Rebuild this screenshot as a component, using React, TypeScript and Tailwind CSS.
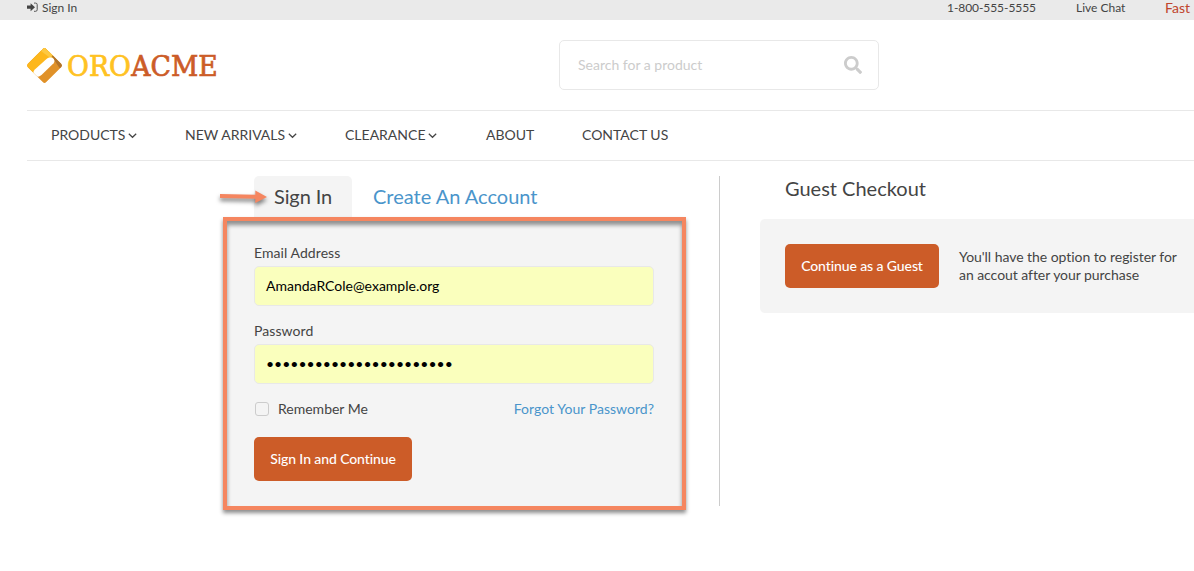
import React from "react";
import { FaSearch } from "react-icons/fa";

function SignInIcon() {
  return (
    <svg className="mt-0.5 h-[11px] w-[11px]" viewBox="0 0 11 11" fill="none">
      <path d="M0 3.6h3.6V1.2L8 5.2 3.6 9.2V6.8H0z" fill="#444" />
      <path d="M7 1.1h1.6a1.6 1.6 0 0 1 1.6 1.6v5a1.6 1.6 0 0 1-1.6 1.6H7" stroke="#555" strokeWidth="1" />
    </svg>
  );
}

function Chevron() {
  return (
    <svg className="ml-[3px] mt-px h-[9px] w-[9px]" viewBox="0 0 9 9" fill="none">
      <path d="M.8 2.800l3.700 3.500L8.200 2.800" stroke="#444" strokeWidth="1.2" />
    </svg>
  );
}

function Logo() {
  return (
    <svg className="h-9 w-[192px] shrink-0 overflow-visible" viewBox="0 0 192 36">
      <defs>
        <clipPath id="mark">
          <rect x="5.500" y="5.500" width="26" height="26" rx="2.500" transform="rotate(45 18.500 18.500)" />
        </clipPath>
      </defs>
      <g clipPath="url(#mark)">
        <path d="M0 0h37v37H0z" fill="#e09128" />
        <path d="M0 0h28v12L9 30H0z" fill="#fdb71c" />
        <path d="M15 4l3-4 12 10-3 3z" fill="#fdc842" />
        <path d="M25.500 9l4-2 8 8v5l-4 1z" fill="#b0732a" />
        <path
          d="M7.500 27.500c-.6-2 0-3.600 1.600-5.200L20.500 12c2.500-2 5-1.800 6.500-.8s2 3.300.6 5L16 27.500c-2 1.800-4.300 2.800-6.500 2.200z"
          fill="#fff"
        />
      </g>
      <g fontFamily="DejaVu Serif, serif" fontSize="27.500" strokeWidth=".7">
        <text x="41" y="28.500" textLength="64" lengthAdjust="spacingAndGlyphs" fill="#ffc222" stroke="#ffc222">ORO</text>
        <text x="105.300" y="28.500" textLength="86.500" lengthAdjust="spacingAndGlyphs" fill="#cc5c28" stroke="#cc5c28">ACME</text>
      </g>
    </svg>
  );
}

function NavItem({ label, menu, width }: { label: string; menu?: boolean; width: string }) {
  return (
    <a className={"flex items-center whitespace-nowrap " + width}>
      {label}
      {menu && <Chevron />}
    </a>
  );
}

function Field({ label, value }: { label: string; value: string }) {
  return (
    <label className="flex flex-col">
      <span className="h-[18px] leading-[18px] tracking-[0.07px]">{label}</span>
      <span className="mt-1 flex h-10 items-center rounded-[5px] border border-[#e8e8e8] bg-[#faffbd] px-[11px] pb-0.5 text-black">
        {value}
      </span>
    </label>
  );
}

function Arrow() {
  return (
    <svg className="absolute left-[214px] top-[184px] h-[30px] w-[60px] overflow-visible" viewBox="0 0 60 30">
      <path
        d="M6 10l35.300.7V6.500l11.700 6.500-11.700 6v-4.200L6 14z"
        fill="#f58660"
        className="drop-shadow-[0_3px_2px_rgba(0,0,0,0.5)]"
      />
    </svg>
  );
}

export default function App() {
  return (
    <div className="relative h-[571px] w-full overflow-hidden bg-white font-['Lato',sans-serif] text-[14px] text-[#444]">
      <div className="flex h-5 items-start justify-between overflow-hidden bg-[#eaeaea] pl-[27px] text-[12px] leading-4">
        <a className="flex gap-1">
          <SignInIcon />
          <span>Sign In</span>
        </a>
        <div className="flex w-[247px] shrink-0 whitespace-nowrap">
          <span className="w-[129px] tracking-[-0.07px]">1-800-555-5555</span>
          <span className="w-[89px]">Live Chat</span>
          <span className="text-[14px] text-[#c0452c]">Fast</span>
        </div>
      </div>

      <header className="ml-[26px] flex h-[90px] items-center">
        <Logo />
        <div className="ml-[341px] flex h-[50px] w-[320px] items-center justify-between rounded-[5px] border border-[#e8e8e8] pl-[18px] pr-4 text-[#ccc]">
          <span className="pb-0.5">Search for a product</span>
          <FaSearch size={18} />
        </div>
      </header>

      <nav className="ml-[27px] flex h-[51px] items-center border-y border-[#e8e8e8] pb-0.5 pl-6">
        <NavItem label="PRODUCTS" menu width="w-[134px]" />
        <NavItem label="NEW ARRIVALS" menu width="w-[160px]" />
        <NavItem label="CLEARANCE" menu width="w-[141px]" />
        <NavItem label="ABOUT" width="w-[96px]" />
        <NavItem label="CONTACT US" width="w-[100px]" />
      </nav>

      <main className="flex items-start pt-[15px]">
        <section className="ml-[223px] w-[463px] shrink-0">
          <div className="ml-[31px] flex h-[41px] text-[20px] leading-[41px]">
            <h2 className="w-[98px] rounded-t-[5px] bg-[#f4f4f4] pl-5 tracking-[-0.1px]">Sign In</h2>
            <a className="ml-[21px] text-[#4a95cb]">Create An Account</a>
          </div>
          <div className="relative h-[293px] border-4 border-[#f58660] bg-[#f4f4f4] px-[27px] pt-[23px] shadow-[0_3px_4px_rgba(0,0,0,0.45),inset_0_4px_4px_rgba(0,0,0,0.42)]">
            <div className="flex w-[400px] flex-col gap-4">
              <Field label="Email Address" value="AmandaRCole@example.org" />
              <Field label="Password" value="•••••••••••••••••••••••" />
            </div>
            <div className="mt-4 flex h-[18px] w-[400px] items-center justify-between">
              <label className="flex items-center">
                <span className="ml-px mr-[9px] h-3.5 w-3.5 rounded-[3px] border border-[#ccc]" />
                <span className="pb-0.5">Remember Me</span>
              </label>
              <a className="pb-0.5 tracking-[0.03px] text-[#4a95cb]">Forgot Your Password?</a>
            </div>
            <button className="mt-[19px] h-11 w-[158px] rounded-[5px] bg-[#cc5c28] pb-0.5 font-medium tracking-[-0.1px] text-white">
              Sign In and Continue
            </button>
          </div>
        </section>

        <section className="ml-[33px] h-[330px] flex-1 border-l border-[#ccc] pl-10">
          <h2 className="h-[43px] pl-[25px] text-[20px] leading-[25px]">Guest Checkout</h2>
          <div className="flex h-[94px] items-center rounded-l-[5px] bg-[#f4f4f4] pl-[25px]">
            <button className="h-11 w-[154px] shrink-0 rounded-[5px] bg-[#cc5c28] pb-0.5 font-medium tracking-[-0.1px] text-white">
              Continue as a Guest
            </button>
            <p className="ml-5 w-[225px] leading-[18px] tracking-[-0.05px]">
              You'll have the option to register for
              <br />
              an accout after your purchase
            </p>
          </div>
        </section>
      </main>
      <Arrow />
    </div>
  );
}
